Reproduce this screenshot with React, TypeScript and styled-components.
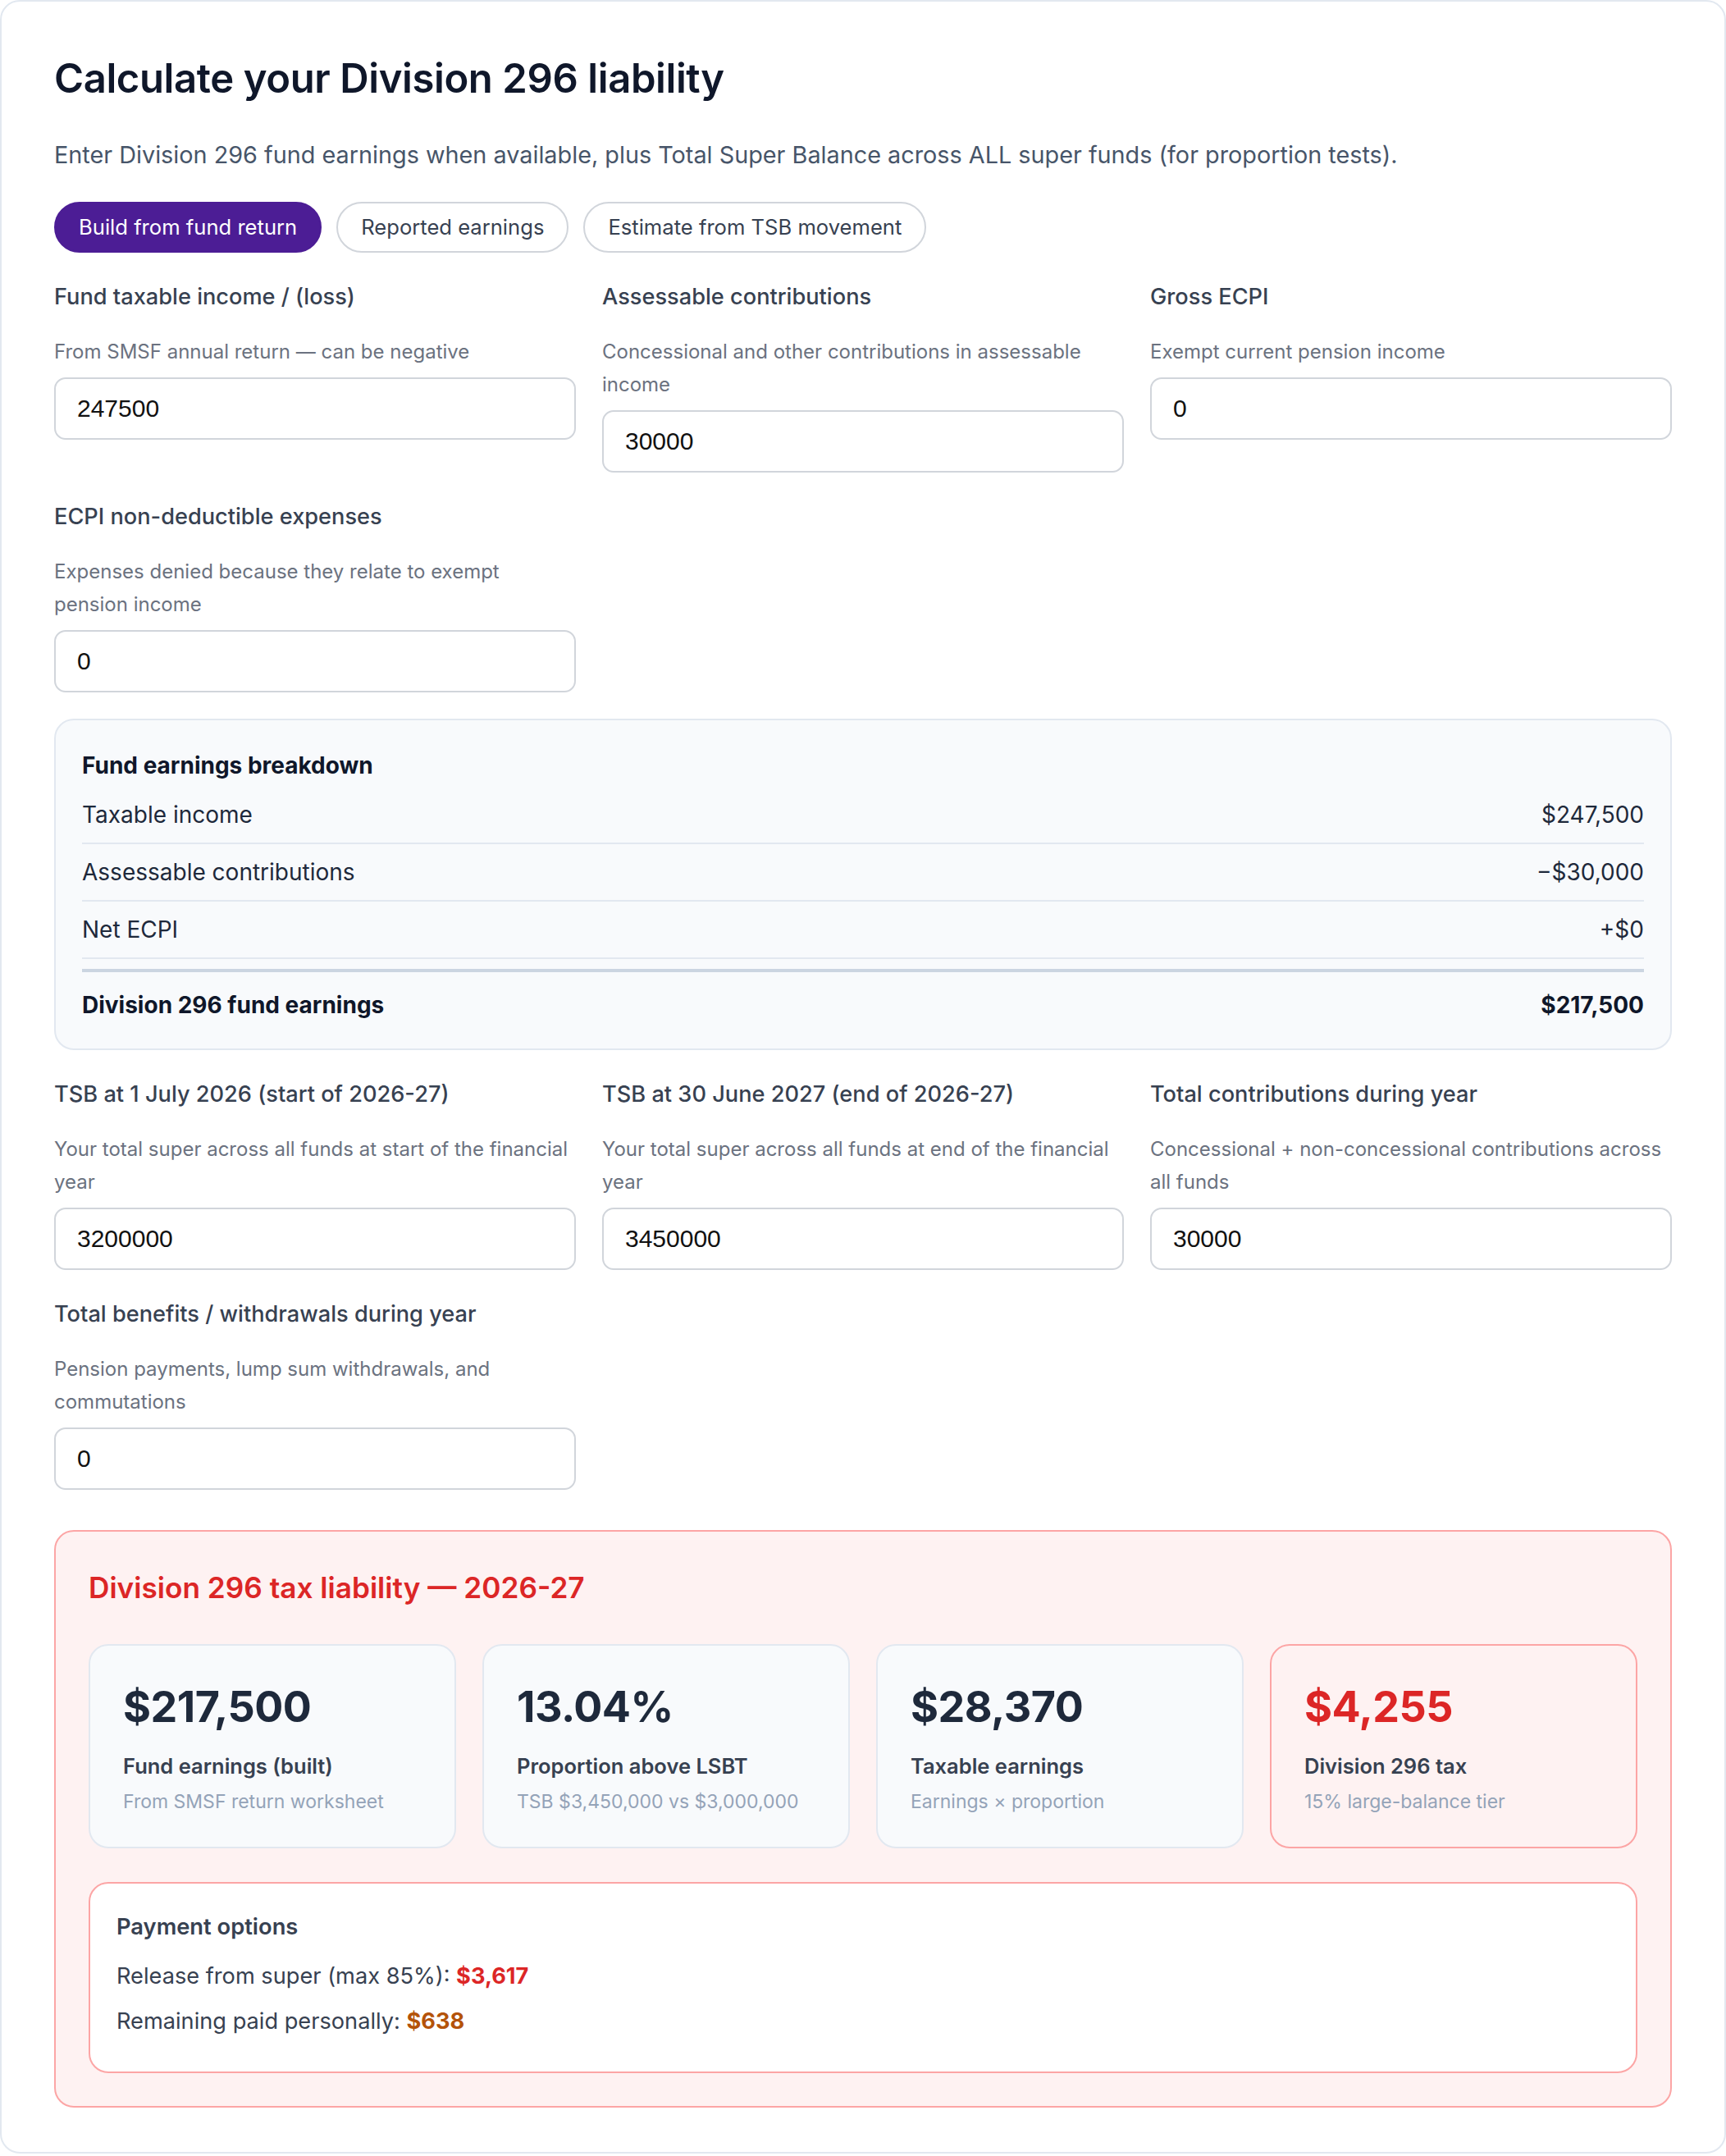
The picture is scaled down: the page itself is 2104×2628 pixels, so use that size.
import React from "react";
import styled, { createGlobalStyle } from "styled-components";

const GlobalStyle = createGlobalStyle`
  * { box-sizing: border-box; }
  html, body { margin: 0; padding: 0; background: #ffffff; }
  body {
    font-family: Inter, "Noto Sans", "Liberation Sans", sans-serif;
    color: #0f172a;
    -webkit-font-smoothing: antialiased;
  }
`;

const Card = styled.section`
  width: 100%;
  border: 2px solid #e2e8f0;
  border-radius: 24px;
  background: #ffffff;
  padding: 64px 64px 54px;
`;

const Title = styled.h1`
  margin: 0 0 40px;
  font-size: 49px;
  line-height: 60px;
  font-weight: 600;
  letter-spacing: -0.4px;
  color: #0f172a;
`;

const Subtitle = styled.p`
  margin: 0 0 34px;
  font-size: 28.8px;
  line-height: 46px;
  color: #475569;
`;

const ModeTabs = styled.div`
  display: flex;
  gap: 18px;
`;

const ModeButton = styled.button<{ $active?: boolean }>`
  height: 62px;
  padding: 0 28px;
  border-radius: 999px;
  border: 2px solid ${(p) => (p.$active ? "#4c1d95" : "#d1d5db")};
  background: ${(p) => (p.$active ? "#4c1d95" : "#ffffff")};
  color: ${(p) => (p.$active ? "#ffffff" : "#374151")};
  font-family: Inter, "Noto Sans", sans-serif;
  font-size: 25.6px;
  line-height: 40px;
  font-weight: 400;
  cursor: pointer;
`;

const FieldGrid = styled.div`
  display: grid;
  grid-template-columns: repeat(3, 1fr);
  column-gap: 32px;
  row-gap: 32px;
  margin-top: 32px;
`;

const Field = styled.label`
  display: flex;
  flex-direction: column;
  min-width: 0;
`;

const FieldLabel = styled.span`
  font-size: 27.2px;
  line-height: 44px;
  font-weight: 500;
  color: #374151;
`;

const FieldHint = styled.span`
  margin-top: 25px;
  font-size: 24px;
  line-height: 40px;
  color: #6b7280;
`;

const NumberInput = styled.input`
  margin-top: 11px;
  width: 100%;
  height: 76px;
  padding: 0 26px;
  border: 2px solid #d1d5db;
  border-radius: 14px;
  background: #ffffff;
  font-family: "Liberation Sans", Arial, sans-serif;
  font-size: 30px;
  color: #111111;
  outline: none;
`;

const Breakdown = styled.div`
  margin-top: 32px;
  border: 2px solid #e2e8f0;
  border-radius: 24px;
  background: #f8fafc;
  padding: 33px 32px 33px;
`;

const BreakdownTitle = styled.h3`
  margin: 0 0 4px;
  font-size: 28px;
  line-height: 44px;
  font-weight: 700;
  color: #0f172a;
`;

const BreakdownRow = styled.div`
  display: flex;
  justify-content: space-between;
  align-items: center;
  padding: 14px 0;
  border-bottom: 2px solid #e2e8f0;
  font-size: 28px;
  line-height: 40px;
  color: #1e293b;
`;

const TotalRow = styled.div`
  display: flex;
  justify-content: space-between;
  align-items: center;
  margin-top: 12px;
  padding-top: 20px;
  border-top: 4px solid #cbd5e1;
  font-size: 28px;
  line-height: 40px;
  font-weight: 700;
  color: #0f172a;
`;

const Liability = styled.div`
  margin-top: 49px;
  border: 2px solid #fca5a5;
  border-radius: 24px;
  background: #fef2f2;
  padding: 40px;
`;

const LiabilityTitle = styled.h2`
  margin: 0 0 41px;
  font-size: 35.2px;
  line-height: 56px;
  font-weight: 600;
  color: #dc2626;
`;

const StatGrid = styled.div`
  display: grid;
  grid-template-columns: repeat(4, 1fr);
  gap: 32px;
`;

const StatCard = styled.div<{ $alert?: boolean }>`
  border: 2px solid ${(p) => (p.$alert ? "#fca5a5" : "#e2e8f0")};
  border-radius: 24px;
  background: ${(p) => (p.$alert ? "#fef2f2" : "#f8fafc")};
  padding: 40px 40px 37px;
  display: flex;
  flex-direction: column;
`;

const StatValue = styled.div<{ $alert?: boolean }>`
  font-size: 52px;
  line-height: 70px;
  font-weight: 700;
  letter-spacing: -0.5px;
  color: ${(p) => (p.$alert ? "#dc2626" : "#1e293b")};
`;

const StatLabel = styled.div`
  margin-top: 17px;
  font-size: 25.5px;
  line-height: 40px;
  font-weight: 600;
  color: #374151;
`;

const StatSub = styled.div`
  margin-top: 5px;
  font-size: 23px;
  line-height: 36px;
  color: #94a3b8;
`;

const PaymentBox = styled.div`
  margin-top: 41px;
  border: 2px solid #fca5a5;
  border-radius: 24px;
  background: #ffffff;
  padding: 32px 32px 37px;
`;

const PaymentTitle = styled.div`
  font-size: 27.3px;
  line-height: 42px;
  font-weight: 600;
  color: #374151;
  margin-bottom: 15px;
`;

const PaymentLine = styled.div`
  font-size: 27.2px;
  line-height: 48px;
  color: #374151;
  & + & { margin-top: 7px; }
`;

const Amount = styled.strong<{ $tone: "red" | "amber" }>`
  font-weight: 700;
  color: ${(p) => (p.$tone === "red" ? "#dc2626" : "#b45309")};
`;

type FieldDef = { label: string; hint: string; value: string };

const buildFields: FieldDef[] = [
  { label: "Fund taxable income / (loss)", hint: "From SMSF annual return — can be negative", value: "247500" },
  { label: "Assessable contributions", hint: "Concessional and other contributions in assessable income", value: "30000" },
  { label: "Gross ECPI", hint: "Exempt current pension income", value: "0" },
  { label: "ECPI non-deductible expenses", hint: "Expenses denied because they relate to exempt pension income", value: "0" },
];

const tsbFields: FieldDef[] = [
  { label: "TSB at 1 July 2026 (start of 2026-27)", hint: "Your total super across all funds at start of the financial year", value: "3200000" },
  { label: "TSB at 30 June 2027 (end of 2026-27)", hint: "Your total super across all funds at end of the financial year", value: "3450000" },
  { label: "Total contributions during year", hint: "Concessional + non-concessional contributions across all funds", value: "30000" },
  { label: "Total benefits / withdrawals during year", hint: "Pension payments, lump sum withdrawals, and commutations", value: "0" },
];

const breakdown = [
  { label: "Taxable income", value: "$247,500" },
  { label: "Assessable contributions", value: "\u2212$30,000" },
  { label: "Net ECPI", value: "+$0" },
];

const stats = [
  { value: "$217,500", label: "Fund earnings (built)", sub: "From SMSF return worksheet" },
  { value: "13.04%", label: "Proportion above LSBT", sub: "TSB $3,450,000 vs $3,000,000" },
  { value: "$28,370", label: "Taxable earnings", sub: "Earnings \u00d7 proportion" },
  { value: "$4,255", label: "Division 296 tax", sub: "15% large-balance tier", alert: true },
];

function Fields({ items }: { items: FieldDef[] }) {
  return (
    <FieldGrid>
      {items.map((f) => (
        <Field key={f.label}>
          <FieldLabel>{f.label}</FieldLabel>
          <FieldHint>{f.hint}</FieldHint>
          <NumberInput type="text" inputMode="numeric" defaultValue={f.value} />
        </Field>
      ))}
    </FieldGrid>
  );
}

export default function App() {
  return (
    <>
      <GlobalStyle />
      <Card>
        <Title>Calculate your Division 296 liability</Title>
        <Subtitle>
          Enter Division 296 fund earnings when available, plus Total Super Balance across ALL super funds (for
          proportion tests).
        </Subtitle>
        <ModeTabs>
          <ModeButton $active>Build from fund return</ModeButton>
          <ModeButton>Reported earnings</ModeButton>
          <ModeButton>Estimate from TSB movement</ModeButton>
        </ModeTabs>

        <Fields items={buildFields} />

        <Breakdown>
          <BreakdownTitle>Fund earnings breakdown</BreakdownTitle>
          {breakdown.map((r) => (
            <BreakdownRow key={r.label}>
              <span>{r.label}</span>
              <span>{r.value}</span>
            </BreakdownRow>
          ))}
          <TotalRow>
            <span>Division 296 fund earnings</span>
            <span>$217,500</span>
          </TotalRow>
        </Breakdown>

        <Fields items={tsbFields} />

        <Liability>
          <LiabilityTitle>Division 296 tax liability — 2026-27</LiabilityTitle>
          <StatGrid>
            {stats.map((s) => (
              <StatCard key={s.label} $alert={s.alert}>
                <StatValue $alert={s.alert}>{s.value}</StatValue>
                <StatLabel>{s.label}</StatLabel>
                <StatSub>{s.sub}</StatSub>
              </StatCard>
            ))}
          </StatGrid>
          <PaymentBox>
            <PaymentTitle>Payment options</PaymentTitle>
            <PaymentLine>
              Release from super (max 85%): <Amount $tone="red">$3,617</Amount>
            </PaymentLine>
            <PaymentLine>
              Remaining paid personally: <Amount $tone="amber">$638</Amount>
            </PaymentLine>
          </PaymentBox>
        </Liability>
      </Card>
    </>
  );
}
